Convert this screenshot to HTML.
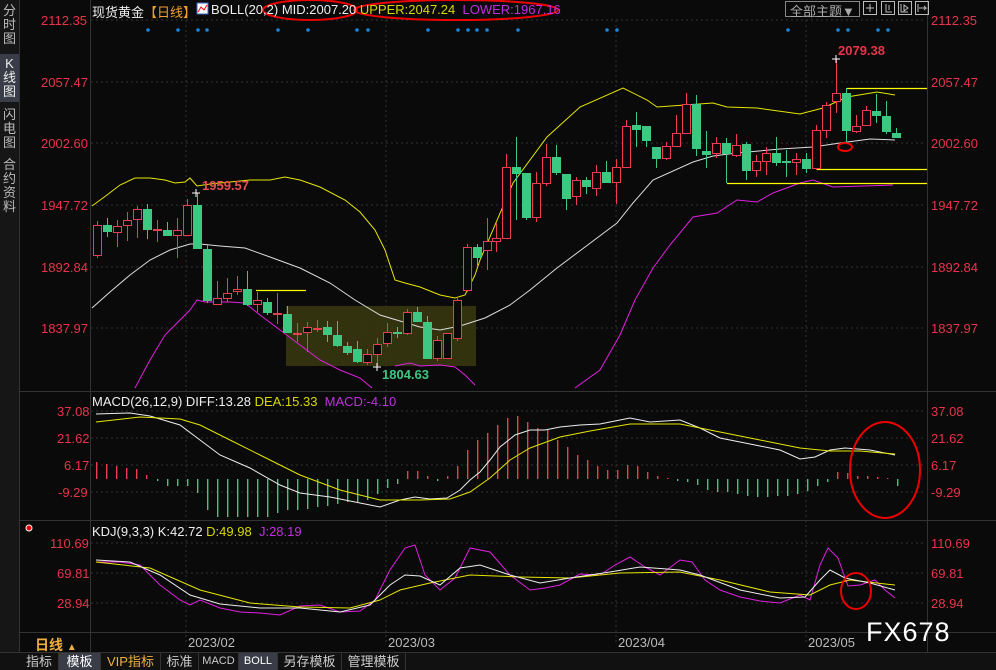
<!DOCTYPE html>
<html><head><meta charset="utf-8"><style>
body{margin:0;width:996px;height:669px;background:#0a0a0a;overflow:hidden;font-family:"Liberation Sans","Noto Sans CJK SC",sans-serif;position:relative}
.a{position:absolute;white-space:nowrap}
.side{position:absolute;left:0;top:0;width:19px;height:652px;background:#161616;border-right:1px solid #333}
.side div{color:#bbb;font-size:13px;line-height:14px;text-align:center;width:19px}
.r{color:#e8344a;font-size:12px}
.tabs{position:absolute;left:0;top:652px;width:996px;height:17px;background:#111;border-top:1px solid #333}
.tabs span{position:absolute;top:0;height:17px;line-height:17px;font-size:13px;color:#ccc;text-align:center;border-right:1px solid #333}
</style></head><body>
<div class="side">
<div style="margin-top:4px">分<br>时<br>图</div>
<div style="background:#3a3d48;margin-top:8px;padding:3px 0;color:#eee">K<br>线<br>图</div>
<div style="margin-top:6px">闪<br>电<br>图</div>
<div style="margin-top:8px">合<br>约<br>资<br>料</div>
</div>
<svg class="a" style="left:0;top:0" width="996" height="669" id="s">
<g stroke="#333" stroke-width="1" fill="none">
<line x1="90.5" y1="0" x2="90.5" y2="652"/>
<line x1="927.5" y1="0" x2="927.5" y2="652"/>
<line x1="20" y1="391.5" x2="996" y2="391.5"/>
<line x1="20" y1="520.5" x2="996" y2="520.5"/>
<line x1="20" y1="632.5" x2="996" y2="632.5"/>
</g>
<g stroke="#333" stroke-dasharray="2,3">
<line x1="91" y1="20" x2="926" y2="20"/><line x1="91" y1="82" x2="926" y2="82"/><line x1="91" y1="143" x2="926" y2="143"/><line x1="91" y1="205" x2="926" y2="205"/><line x1="91" y1="267" x2="926" y2="267"/><line x1="91" y1="328" x2="926" y2="328"/>
<line x1="91" y1="411" x2="926" y2="411"/><line x1="91" y1="438" x2="926" y2="438"/><line x1="91" y1="465" x2="926" y2="465"/><line x1="91" y1="492" x2="926" y2="492"/>
<line x1="91" y1="543" x2="926" y2="543"/><line x1="91" y1="573" x2="926" y2="573"/><line x1="91" y1="603" x2="926" y2="603"/>
<line x1="186" y1="20" x2="186" y2="645"/><line x1="386" y1="20" x2="386" y2="645"/><line x1="616" y1="20" x2="616" y2="645"/><line x1="806" y1="20" x2="806" y2="645"/>
</g>
<rect x="286" y="306" width="190" height="60" fill="#3a3a10" opacity="0.85"/>
<g id="bands" fill="none" stroke-width="1">
<polyline stroke="#e6e600" points="92,206 107,195 120,185 135,178 150,178 165,180 175,183 185,182 190,178 197,186 210,184 230,182 250,180 270,180 285,177 300,180 320,187 345,200 360,212 375,230 385,250 395,280 405,283 420,287 440,295 455,298 465,295 475,275 480,260 513,183 547,137 580,107 623,88 647,100 657,107 713,103 727,107 757,108 800,114 823,108 847,97 877,92 895,95"/>
<polyline stroke="#ddd" points="92,308 110,292 130,275 150,260 170,250 190,244 200,244 220,246 245,248 270,257 300,268 330,283 355,300 380,315 400,321 420,327 440,330 460,326 485,318 510,305 530,290 557,268 585,247 617,223 633,203 653,180 693,162 713,156 737,153 780,149 813,147 840,143 870,139 895,140"/>
<polyline stroke="#e020e0" points="135,388 150,360 165,335 180,320 190,310 197,300 205,302 230,302 245,303 260,315 280,330 300,345 320,360 340,370 360,378 372,388"/>
<polyline stroke="#e020e0" points="395,366 410,363 420,366 440,365 455,367 465,375 475,385"/>
<polyline stroke="#e020e0" points="575,388 600,370 620,335 635,300 653,268 670,245 693,217 717,213 737,200 757,202 773,193 800,183 813,180 833,187 893,185"/>
</g>
<g stroke="#ffff00" stroke-width="1.3">
<line x1="847" y1="88.5" x2="927" y2="88.5"/><line x1="817" y1="169.5" x2="927" y2="169.5"/><line x1="727" y1="183.5" x2="927" y2="183.5"/><line x1="256" y1="290.5" x2="306" y2="290.5"/>
</g>
<g id="cd"></g>
<ellipse cx="845" cy="147" rx="7" ry="4" fill="none" stroke="#e00" stroke-width="2"/>
<g fill="#fff" stroke="#fff"><line x1="192" y1="193" x2="200" y2="193"/><line x1="196" y1="189" x2="196" y2="197"/><line x1="832" y1="59" x2="840" y2="59"/><line x1="836" y1="55" x2="836" y2="63"/><line x1="373" y1="367" x2="381" y2="367"/><line x1="377" y1="363" x2="377" y2="371"/></g>
<g id="dots" fill="#1a86d8"></g>
<g id="mh"></g>
<polyline fill="none" stroke="#eee" points="96,414 130,413 150,416 180,425 200,440 220,455 250,468 280,485 300,493 330,497 360,503 380,507 400,500 415,497 430,499 447,498 460,490 470,480 480,472 490,460 500,447 515,435 530,430 545,430 560,427 580,425 600,424 630,418 650,422 680,420 700,428 720,438 740,442 760,446 780,450 800,459 815,457 830,450 845,448 870,450 895,455"/>
<polyline fill="none" stroke="#e6e600" points="96,422 140,417 180,419 200,425 230,440 260,455 300,475 340,490 380,500 420,500 450,499 470,492 490,478 510,460 530,448 560,437 590,431 630,424 680,424 720,432 760,440 800,448 830,451 860,451 895,454"/>
<ellipse cx="885" cy="470" rx="35" ry="48" fill="none" stroke="#e00" stroke-width="2"/>
<polyline fill="none" stroke="#e020e0" points="96,562 120,562 140,565 160,585 180,600 190,605 200,600 220,608 240,612 260,613 280,615 300,606 320,605 340,612 360,611 375,600 390,570 405,548 415,545 425,575 440,590 455,578 470,548 490,552 510,575 530,590 545,588 560,585 580,574 600,575 615,565 630,557 645,567 660,575 680,560 692,562 705,580 720,590 740,597 760,601 780,603 800,595 810,600 820,565 828,548 838,558 848,586 860,585 875,580 885,590 895,598"/>
<polyline fill="none" stroke="#e6e600" points="96,562 150,568 200,590 250,603 300,607 350,608 380,600 400,590 430,583 470,575 520,577 570,578 620,573 680,572 720,580 770,592 810,595 830,585 850,580 895,585"/>
<polyline fill="none" stroke="#eee" points="96,560 130,562 160,575 190,595 220,604 260,608 300,608 340,612 370,605 390,585 405,575 420,576 440,585 460,568 480,565 510,575 540,583 570,578 610,572 640,567 680,570 700,575 740,590 780,598 805,597 820,580 830,570 845,578 870,583 895,590"/>
<ellipse cx="856" cy="591" rx="15" ry="18" fill="none" stroke="#e00" stroke-width="2"/>
<ellipse cx="310" cy="10" rx="47" ry="10" fill="none" stroke="#e00" stroke-width="2"/>
<ellipse cx="456" cy="10" rx="102" ry="10" fill="none" stroke="#e00" stroke-width="2"/>
<circle cx="29" cy="528" r="3" fill="#e00" stroke="#fff" stroke-width="1"/>
<rect x="785.5" y="1.5" width="74" height="15" fill="none" stroke="#888"/>
<g fill="none" stroke="#bbb"><rect x="863.5" y="1.5" width="13" height="13"/><rect x="881.5" y="1.5" width="13" height="13"/><rect x="898.5" y="1.5" width="13" height="13"/><rect x="915.5" y="1.5" width="13" height="13"/>
<path d="M870 4v8M866 8h8M886 4v8h6M889 5v5M901 4v8h7M904 5l4 3-4 3z M918 4v8M919 8h7l-2-2m2 2-2 2"/></g>
<rect x="197" y="3" width="11" height="11" fill="#fff" stroke="#36c"/><path d="M198 12l3-5 3 3 3-5" stroke="#e00" fill="none"/>
</svg>
<div class="a" style="left:92px;top:2px;font-size:13px;color:#eee">现货黄金<span style="color:#f0a030">【日线】</span></div>
<div class="a" style="left:211px;top:2px;font-size:13px;color:#eee">BOLL(20,2) MID:2007.20 <span style="color:#d8d800">UPPER:2047.24</span> &nbsp;<span style="color:#c030e0">LOWER:1967.16</span></div>
<div class="a" style="left:790px;top:1px;font-size:13px;color:#aaa">全部主题▼</div>
<div class="a r" style="left:41px;top:13px;font-size:13px">2112.35</div>
<div class="a r" style="left:41px;top:75px;font-size:13px">2057.47</div>
<div class="a r" style="left:41px;top:136px;font-size:13px">2002.60</div>
<div class="a r" style="left:41px;top:198px;font-size:13px">1947.72</div>
<div class="a r" style="left:41px;top:260px;font-size:13px">1892.84</div>
<div class="a r" style="left:41px;top:321px;font-size:13px">1837.97</div>
<div class="a r" style="left:931px;top:13px;font-size:13px">2112.35</div>
<div class="a r" style="left:931px;top:75px;font-size:13px">2057.47</div>
<div class="a r" style="left:931px;top:136px;font-size:13px">2002.60</div>
<div class="a r" style="left:931px;top:198px;font-size:13px">1947.72</div>
<div class="a r" style="left:931px;top:260px;font-size:13px">1892.84</div>
<div class="a r" style="left:931px;top:321px;font-size:13px">1837.97</div>
<div class="a r" style="left:57px;top:404px;font-size:13px">37.08</div>
<div class="a r" style="left:57px;top:431px;font-size:13px">21.62</div>
<div class="a r" style="left:64px;top:458px;font-size:13px">6.17</div>
<div class="a r" style="left:58px;top:485px;font-size:13px">-9.29</div>
<div class="a r" style="left:931px;top:404px;font-size:13px">37.08</div>
<div class="a r" style="left:931px;top:431px;font-size:13px">21.62</div>
<div class="a r" style="left:931px;top:458px;font-size:13px">6.17</div>
<div class="a r" style="left:931px;top:485px;font-size:13px">-9.29</div>
<div class="a r" style="left:50px;top:536px;font-size:13px">110.69</div>
<div class="a r" style="left:57px;top:566px;font-size:13px">69.81</div>
<div class="a r" style="left:57px;top:596px;font-size:13px">28.94</div>
<div class="a r" style="left:931px;top:536px;font-size:13px">110.69</div>
<div class="a r" style="left:931px;top:566px;font-size:13px">69.81</div>
<div class="a r" style="left:931px;top:596px;font-size:13px">28.94</div>
<div class="a" style="left:838px;top:43px;font-size:13px;color:#e8344a;font-weight:bold">2079.38</div>
<div class="a" style="left:202px;top:178px;font-size:13px;color:#e85050;font-weight:bold">1959.57</div>
<div class="a" style="left:382px;top:367px;font-size:13px;color:#3cc880;font-weight:bold">1804.63</div>
<div class="a" style="left:92px;top:394px;font-size:13px;color:#eee">MACD(26,12,9) DIFF:13.28 <span style="color:#d8d800">DEA:15.33</span> &nbsp;<span style="color:#c030e0">MACD:-4.10</span></div>
<div class="a" style="left:92px;top:524px;font-size:13px;color:#eee">KDJ(9,3,3) K:42.72 <span style="color:#d8d800">D:49.98</span> &nbsp;<span style="color:#c030e0">J:28.19</span></div>
<div class="a" style="left:35px;top:635px;font-size:14px;color:#f0b040;font-weight:bold">日线 <span style="font-size:10px">▲</span></div>
<div class="a" style="left:188px;top:635px;font-size:13px;color:#bbb">2023/02</div>
<div class="a" style="left:388px;top:635px;font-size:13px;color:#bbb">2023/03</div>
<div class="a" style="left:618px;top:635px;font-size:13px;color:#bbb">2023/04</div>
<div class="a" style="left:808px;top:635px;font-size:13px;color:#bbb">2023/05</div>
<div class="a" style="left:866px;top:617px;font-size:27px;color:#fff;letter-spacing:1px">FX678</div>
<div class="tabs">
<span style="left:20px;width:38px">指标</span>
<span style="left:59px;width:41px;background:#3a3d48;color:#fff">模板</span>
<span style="left:101px;width:59px;color:#f0b040">VIP指标</span>
<span style="left:161px;width:37px">标准</span>
<span style="left:199px;width:39px;font-size:11px">MACD</span>
<span style="left:239px;width:38px;background:#3a3d48;color:#fff;font-size:11px">BOLL</span>
<span style="left:278px;width:63px">另存模板</span>
<span style="left:342px;width:63px">管理模板</span>
</div>
<script>
var NS="http://www.w3.org/2000/svg";
function el(t,a,p){var e=document.createElementNS(NS,t);for(var k in a)e.setAttribute(k,a[k]);p.appendChild(e);return e}
var C=[[97,225,255,221,258,'r'],[107,225,231,218,237,'g'],[117,226,232,220,247,'r'],[127,220,225,212,241,'r'],[137,209,219,206,238,'r'],[147,209,229,204,239,'g'],[157,229,230,220,242,'r'],[167,230,235,222,236,'g'],[177,230,235,218,258,'r'],[187,205,235,199,236,'r'],[197,205,248,193,248,'g'],[207,249,300,245,303,'g'],[217,298,304,281,305,'r'],[227,293,298,278,302,'r'],[237,289,291,276,295,'r'],[247,289,304,271,306,'g'],[257,300,304,292,312,'r'],[267,302,312,298,315,'g'],[277,313,314,293,324,'r'],[287,314,332,306,333,'g'],[297,333,334,323,342,'r'],[307,327,332,322,352,'r'],[317,328,329,320,332,'r'],[327,327,334,321,342,'g'],[337,335,345,321,347,'g'],[347,346,352,342,355,'g'],[357,349,361,341,363,'g'],[367,354,362,349,365,'r'],[377,344,354,338,366,'r'],[387,332,343,323,347,'r'],[397,332,333,327,338,'g'],[407,312,333,309,335,'r'],[417,312,321,307,322,'g'],[427,322,358,316,358,'g'],[437,340,358,336,361,'r'],[447,333,358,334,358,'r'],[457,300,338,297,341,'r'],[467,247,290,244,292,'r'],[477,247,257,244,266,'g'],[487,241,250,218,270,'r'],[496,238,241,223,252,'r'],[506,167,238,154,239,'r'],[516,167,173,137,220,'g'],[526,173,217,173,220,'g'],[536,183,217,172,222,'r'],[546,157,183,144,186,'r'],[556,157,172,145,175,'g'],[566,174,198,174,210,'g'],[576,180,196,177,205,'r'],[586,180,186,177,194,'g'],[596,172,188,165,196,'r'],[606,172,182,161,183,'g'],[616,167,182,159,204,'r'],[626,126,167,120,168,'r'],[636,125,129,112,147,'g'],[646,126,140,126,147,'g'],[656,147,158,147,168,'g'],[666,146,158,142,160,'r'],[676,133,146,115,146,'r'],[686,104,133,93,134,'r'],[696,104,148,95,156,'g'],[706,151,154,131,168,'g'],[716,143,153,137,158,'r'],[726,143,153,138,183,'g'],[736,145,155,134,157,'r'],[746,144,170,142,180,'g'],[756,161,170,155,177,'r'],[766,153,161,147,175,'r'],[776,153,162,137,166,'g'],[786,161,162,150,177,'g'],[796,159,162,153,175,'r'],[806,159,168,153,173,'g'],[816,130,168,125,170,'r'],[826,105,130,102,138,'r'],[836,93,101,59,113,'r'],[846,93,130,88,143,'g'],[856,126,131,115,133,'r'],[866,110,125,106,126,'r'],[876,111,115,94,123,'g'],[886,116,131,101,134,'g'],[896,133,137,128,137,'g']];
var g=document.getElementById('cd');
C.forEach(function(c){var red=c[5]=='r',col=red?'#f03c50':'#3cc880';
el('rect',{x:c[0],y:c[3],width:1,height:c[4]-c[3],fill:col},g);
var h=Math.max(1,c[2]-c[1]);
el('rect',{x:c[0]-3.5,y:c[1]+.5,width:8,height:h,fill:red?'#0a0a0a':col,stroke:col},g);});
var D=[148,178,198,207,278,308,357,368,428,458,468,477,487,518,607,617,788,838,848,878,888];
var dg=document.getElementById('dots');D.forEach(function(x){el('circle',{cx:x,cy:30,r:1.8},dg)});
var M=[[96,462],[106,464],[116,466],[126,468],[136,469],[146,475],[157,481],[167,486],[177,486],[187,486],[197,493],[207,510],[217,517],[227,517],[237,517],[247,517],[257,517],[267,517],[277,513],[287,510],[297,510],[307,509],[317,507],[327,506],[337,504],[347,502],[357,502],[367,500],[377,494],[387,488],[397,484],[407,471],[417,471],[427,476],[437,481],[447,476],[457,466],[467,450],[477,440],[487,433],[497,425],[507,418],[517,416],[527,422],[537,428],[547,430],[557,440],[567,447],[577,455],[587,460],[597,466],[607,470],[617,470],[627,465],[637,466],[647,472],[657,476],[667,478],[677,481],[687,482],[697,485],[707,490],[717,492],[727,492],[737,494],[747,496],[757,497],[767,497],[777,496],[787,496],[797,494],[807,491],[817,486],[827,482],[837,472],[847,473],[857,476],[867,476],[877,477],[887,478],[897,486]];
var mg=document.getElementById('mh');M.forEach(function(m){var z=479,t=Math.min(z,m[1]),h=Math.max(1,Math.abs(m[1]-z));el('rect',{x:m[0],y:t,width:1.4,height:h,fill:m[1]<z?'#f03c50':'#3cc880'},mg)});
</script>
</body></html>
